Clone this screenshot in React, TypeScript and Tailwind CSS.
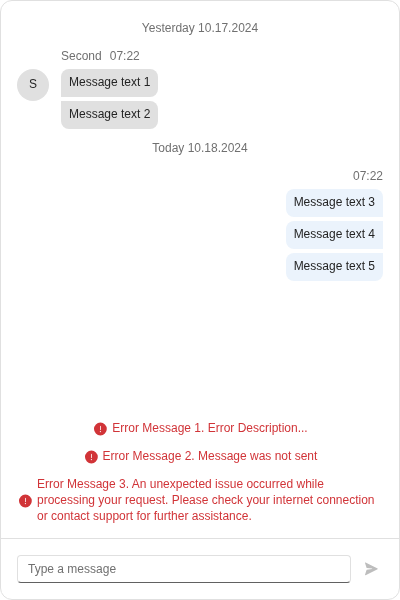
import React from "react";

type Side = "left" | "right";

function DateHeader({ children }: { children: string }) {
  return <div className="h-4 text-center text-[#707070]">{children}</div>;
}

function Bubble({ text, side, position }: { text: string; side: Side; position: "first" | "middle" | "last" }) {
  const tone = side === "left" ? "bg-[#e0e0e0]" : "bg-[#ebf3fc]";
  const shape =
    side === "left"
      ? { first: "rounded-t-lg rounded-br-lg", middle: "rounded-r-lg", last: "rounded-b-lg rounded-tr-lg" }[position]
      : { first: "rounded-t-lg rounded-bl-lg", middle: "rounded-l-lg", last: "rounded-b-lg rounded-tl-lg" }[position];
  return <div className={`h-7 px-2 pt-[5px] text-[#242424] ${tone} ${shape}`}>{text}</div>;
}

function ErrorMessage({ text }: { text: string }) {
  return (
    <div className="flex items-center justify-center gap-1 text-[#d13438]">
      <svg className="size-4 shrink-0 translate-x-[0.4px] translate-y-px" viewBox="0 0 20 20" fill="currentColor">
        <path d="M10 2a8 8 0 1 1 0 16 8 8 0 0 1 0-16Zm0 10.5a.75.75 0 1 0 0 1.5.75.75 0 0 0 0-1.5ZM10 6a.5.5 0 0 0-.5.41v4.68a.5.5 0 0 0 1 0V6.41A.5.5 0 0 0 10 6Z" />
      </svg>
      <span>{text}</span>
    </div>
  );
}

export default function App() {
  return (
    <div className="flex h-[600px] w-[400px] flex-col overflow-hidden rounded-xl border border-[#e0e0e0] bg-white font-['Liberation_Sans',Arial,sans-serif] text-xs leading-4 will-change-transform">
      <main className="flex flex-1 flex-col px-4 pt-[19px]">
        <DateHeader>Yesterday 10.17.2024</DateHeader>
        <div className="mt-3 flex gap-3">
          <div className="mt-[21px] flex size-8 items-center justify-center rounded-full bg-[#e0e0e0] pb-0.5 text-[#242424]">S</div>
          <div className="flex flex-col items-start gap-1">
            <div className="mb-[1px] flex h-4 gap-2 text-[#707070]">
              <span>Second</span>
              <span>07:22</span>
            </div>
            <Bubble text="Message text 1" side="left" position="first" />
            <Bubble text="Message text 2" side="left" position="last" />
          </div>
        </div>
        <div className="mt-[11px]">
          <DateHeader>Today 10.18.2024</DateHeader>
        </div>
        <div className="mt-3 flex flex-col items-end gap-1">
          <div className="mb-[1px] h-4 text-[#707070]">07:22</div>
          <Bubble text="Message text 3" side="right" position="first" />
          <Bubble text="Message text 4" side="right" position="middle" />
          <Bubble text="Message text 5" side="right" position="last" />
        </div>
      </main>
      <div className="flex flex-col gap-3 px-4 pb-[14px]">
        <ErrorMessage text="Error Message 1. Error Description..." />
        <ErrorMessage text="Error Message 2. Message was not sent" />
        <ErrorMessage text="Error Message 3. An unexpected issue occurred while processing your request. Please check your internet connection or contact support for further assistance." />
      </div>
      <footer className="flex h-[61px] items-center border-t border-[#e0e0e0] pr-5 pl-4">
        <div className="flex h-7 w-[334px] items-center rounded-sm border border-[#e0e0e0] border-b-[#616161] px-[10px] text-[#707070]">Type a message</div>
        <svg className="ml-3 size-4 translate-x-[0.4px] -translate-y-[0.2px]" viewBox="0 0 20 20" fill="#bdbdbd">
          <path d="M2.72 2.05a.5.5 0 0 0-.7.6l1.9 5.9c.06.18.21.3.4.34l6.5.87c.27.05.27.43 0 .48l-6.5.87a.5.5 0 0 0-.4.34l-1.9 5.9a.5.5 0 0 0 .7.6l15-7.5a.5.5 0 0 0 0-.9l-15-7.5Z" />
        </svg>
      </footer>
    </div>
  );
}
